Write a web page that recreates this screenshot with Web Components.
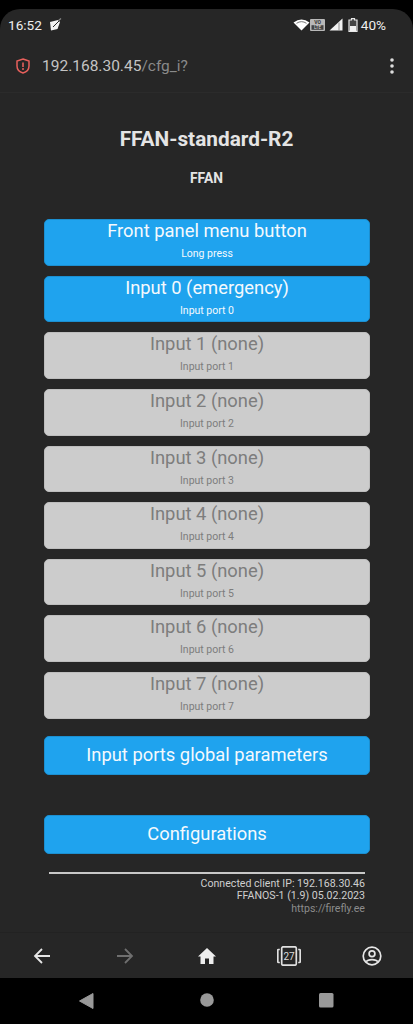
<!DOCTYPE html>
<html lang="en">
<head>
<meta charset="utf-8">
<title>FFAN-standard-R2</title>
<style>
  html, body { margin: 0; padding: 0; background: #000; }
  body { width: 413px; height: 1024px; overflow: hidden; font-family: Roboto, sans-serif; display: flex; flex-direction: column; }
</style>
</head>
<body>
<phone-status></phone-status>
<address-bar host="192.168.30.45" path="/cfg_i?"></address-bar>
<config-page>
  <cfg-button on label="Front panel menu button" sub="Long press"></cfg-button>
  <cfg-button on label="Input 0 (emergency)" sub="Input port 0"></cfg-button>
  <cfg-button label="Input 1 (none)" sub="Input port 1"></cfg-button>
  <cfg-button label="Input 2 (none)" sub="Input port 2"></cfg-button>
  <cfg-button label="Input 3 (none)" sub="Input port 3"></cfg-button>
  <cfg-button label="Input 4 (none)" sub="Input port 4"></cfg-button>
  <cfg-button label="Input 5 (none)" sub="Input port 5"></cfg-button>
  <cfg-button label="Input 6 (none)" sub="Input port 6"></cfg-button>
  <cfg-button label="Input 7 (none)" sub="Input port 7"></cfg-button>
  <cfg-button on wide label="Input ports global parameters" style="margin-top:7px"></cfg-button>
  <cfg-button on wide label="Configurations" style="margin-top:30px"></cfg-button>
</config-page>
<browser-toolbar></browser-toolbar>
<android-nav></android-nav>

<script>
class PhoneStatus extends HTMLElement {
  constructor() {
    super();
    this.attachShadow({ mode: 'open' });
    this.shadowRoot.innerHTML = `
      <style>
        :host { display: block; background: #000; color: #eee; font: 400 13.6px Roboto, sans-serif; }
        .bar {
          height: 31px;
          margin-top: 9px;
          padding: 0 27px 0 8px;
          background: #262626;
          border-radius: 20px 20px 0 0;
          display: flex;
          align-items: center;
        }
        .time { margin-right: 7px; }
        .gap { flex: 1; }
        svg { display: block; }
        .right { display: flex; align-items: center; }
      </style>
      <div class="bar">
        <span class="time">16:52</span>
        <svg width="13" height="13" viewBox="0 0 13 13"><path d="M1 4 L9 2 L11 4 L8.5 11 L2 12.5 Z" fill="#f2f2f2"/><path d="M4 9 L11 2" stroke="#262626" stroke-width="1"/><path d="M9.5 2.5 L12 0.5" stroke="#888" stroke-width="1.2"/></svg>
        <span class="gap"></span>
        <span class="right">
          <svg width="17" height="12" viewBox="0 0 17 12"><path d="M0.5 3.5 Q8.5 -2.5 16.5 3.5 L8.5 11.5 Z" fill="#fff"/><path d="M3.5 4.3 Q8.5 1 13.5 4.3" stroke="#555" stroke-width="0.8" fill="none"/></svg>
          <svg width="15" height="12" viewBox="0 0 15 12"><rect width="15" height="12" rx="1" fill="#b8b8b8"/><text x="7.5" y="5" font-family="Roboto, sans-serif" font-size="5" font-weight="700" fill="#333" text-anchor="middle">VO</text><rect x="1.5" y="6.2" width="12" height="4.6" fill="#444"/><text x="7.5" y="10.2" font-family="Roboto, sans-serif" font-size="4.6" fill="#ddd" text-anchor="middle">LTE</text></svg>
          <svg width="14" height="13" viewBox="0 0 14 13" style="margin-left:4px"><path d="M0.5 12.5 L13.5 0.5 V12.5 Z" fill="#f2f2f2"/><path d="M10 4.5 V12.5" stroke="#777" stroke-width="0.8"/></svg>
          <svg width="10" height="14" viewBox="0 0 10 14" style="margin-left:5px"><path d="M3.5 0.7 H6.5 V2 H9 V13.3 H1 V2 H3.5 Z" fill="#444" stroke="#e8e8e8" stroke-width="1.2"/><rect x="2" y="8" width="6" height="5" fill="#f0f0f0"/></svg>
          <span style="margin-left:3px">40%</span>
        </span>
      </div>
    `;
  }
}

class AddressBar extends HTMLElement {
  constructor() {
    super();
    this.attachShadow({ mode: 'open' });
  }

  connectedCallback() {
    this.shadowRoot.innerHTML = `
      <style>
        :host { display: block; background: #262626; }
        .bar { height: 52px; display: flex; align-items: center; padding: 0 19px 0 16px; font: 400 15.5px Roboto, sans-serif; }
        .url { margin-left: 12px; color: #c4c4c4; flex: 1; }
        .path { color: #8a8a8a; }
        svg { display: block; }
      </style>
      <div class="bar">
        <svg width="14" height="16" viewBox="0 0 14 16"><path d="M7 1 L13 3 V8 C13 11.5 10.5 14 7 15 C3.5 14 1 11.5 1 8 V3 Z" fill="none" stroke="#e8605c" stroke-width="1.5"/><path d="M7 4.5 V9" stroke="#e8605c" stroke-width="1.6"/><circle cx="7" cy="11" r="1" fill="#e8605c"/></svg>
        <span class="url">${this.getAttribute('host')}<span class="path">${this.getAttribute('path')}</span></span>
        <svg width="4" height="16" viewBox="0 0 4 16"><circle cx="2" cy="2" r="1.8" fill="#ddd"/><circle cx="2" cy="8" r="1.8" fill="#ddd"/><circle cx="2" cy="14" r="1.8" fill="#ddd"/></svg>
      </div>
    `;
  }
}

class ConfigPage extends HTMLElement {
  constructor() {
    super();
    this.attachShadow({ mode: 'open' });
    this.shadowRoot.innerHTML = `
      <style>
        :host { display: block; height: 840px; background: #262626; box-shadow: inset 0 1px 0 #2b2b2b; color: #e4e4e4; font-family: Roboto, sans-serif; }
        h1 { margin: 0; padding-top: 34px; font: 700 20.8px/26px Roboto, sans-serif; text-align: center; }
        h2 { margin: 0; padding-top: 18px; font: 700 13.8px/17px Roboto, sans-serif; text-align: center; }
        .buts { display: flex; flex-direction: column; margin: 32px 43px 0 44px; }
        .foot { margin: 8px 48px 0 49px; border-top: 2px solid #c8c8c8; padding-top: 4px; text-align: right; font: 400 10.6px/12.6px Roboto, sans-serif; color: #cfcfcf; }
        .link { color: #8c8c8c; }
      </style>
      <h1>FFAN-standard-R2</h1>
      <h2>FFAN</h2>
      <div class="buts"><slot></slot></div>
      <div class="foot">
        <div>Connected client IP: 192.168.30.46</div>
        <div>FFANOS-1 (1.9) 05.02.2023</div>
        <div class="link">https://firefly.ee</div>
      </div>
    `;
  }
}

class CfgButton extends HTMLElement {
  constructor() {
    super();
    this.attachShadow({ mode: 'open' });
  }

  connectedCallback() {
    const sub = this.getAttribute('sub');
    this.shadowRoot.innerHTML = `
      <style>
        :host {
          display: flex;
          flex-direction: column;
          align-items: center;
          box-sizing: border-box;
          height: 46.625px;
          margin-bottom: 10px;
          border-radius: 5px;
          background: #ccc;
          color: #7d7d7d;
          border: 1px solid #bdbdbd;
          font-family: Roboto, sans-serif;
        }
        :host([on]) { background: #1fa3ee; color: #f4f9fd; border-color: #1c8fd0; }
        :host([wide]) { height: 39px; justify-content: center; }
        .label { font-size: 18.35px; line-height: 22px; }
        .sub { font-size: 10.5px; line-height: 12px; margin-top: 6px; }
      </style>
      <span class="label">${this.getAttribute('label')}</span>
      ${sub ? `<span class="sub">${sub}</span>` : ''}
    `;
  }
}

class BrowserToolbar extends HTMLElement {
  constructor() {
    super();
    this.attachShadow({ mode: 'open' });
    this.shadowRoot.innerHTML = `
      <style>
        :host { display: block; background: #262626; border-top: 1px solid #222; box-sizing: border-box; height: 46px; }
        .bar { height: 100%; display: grid; grid-template-columns: repeat(5, 1fr); padding-left: 1px; }
        .cell { display: flex; align-items: center; justify-content: center; }
        svg { display: block; }
      </style>
      <div class="bar">
        <div class="cell"><svg width="18" height="18" viewBox="0 0 18 18"><path d="M17 9 H2 M9 2 L2 9 L9 16" fill="none" stroke="#e6e6e6" stroke-width="1.8"/></svg></div>
        <div class="cell"><svg width="18" height="18" viewBox="0 0 18 18"><path d="M1 9 H16 M9 2 L16 9 L9 16" fill="none" stroke="#6f6f6f" stroke-width="1.8"/></svg></div>
        <div class="cell"><svg width="20" height="18" viewBox="0 0 20 18"><path d="M10 1 L19 9.5 H16.5 V17 H12 V11.5 H8 V17 H3.5 V9.5 H1 Z" fill="#eee"/></svg></div>
        <div class="cell"><svg width="24" height="20" viewBox="0 0 24 20"><rect x="4.7" y="0.8" width="14.6" height="18.4" rx="1.5" fill="none" stroke="#e0e0e0" stroke-width="1.7"/><path d="M2.8 3.5 H1.6 Q0.8 3.5 0.8 4.3 V15.7 Q0.8 16.5 1.6 16.5 H2.8 M21.2 3.5 H22.4 Q23.2 3.5 23.2 4.3 V15.7 Q23.2 16.5 22.4 16.5 H21.2" fill="none" stroke="#e0e0e0" stroke-width="1.7"/><text x="12" y="13.5" font-family="Roboto, sans-serif" font-size="10" fill="#dcdcdc" text-anchor="middle">27</text></svg></div>
        <div class="cell"><svg width="20" height="20" viewBox="0 0 20 20"><circle cx="10" cy="10" r="8.8" fill="none" stroke="#e6e6e6" stroke-width="1.7"/><circle cx="10" cy="7.8" r="2.9" fill="none" stroke="#e6e6e6" stroke-width="1.7"/><path d="M4.2 15.8 C6 12.8 14 12.8 15.8 15.8" fill="none" stroke="#e6e6e6" stroke-width="1.7"/></svg></div>
      </div>
    `;
  }
}

class AndroidNav extends HTMLElement {
  constructor() {
    super();
    this.attachShadow({ mode: 'open' });
    this.shadowRoot.innerHTML = `
      <style>
        :host { display: block; background: #000; height: 46px; position: relative; }
        svg { position: absolute; top: 15px; }
      </style>
      <svg style="left:79px" width="15" height="16" viewBox="0 0 15 16"><path d="M14 0.5 V15.5 L0.5 8 Z" fill="#999" stroke="#999" stroke-linejoin="round"/></svg>
      <svg style="left:200px" width="14" height="14" viewBox="0 0 14 14"><circle cx="7" cy="7" r="6.8" fill="#999"/></svg>
      <svg style="left:319px" width="15" height="15" viewBox="0 0 15 15"><rect width="14.5" height="14.5" rx="1.5" fill="#999"/></svg>
    `;
  }
}

customElements.define('phone-status', PhoneStatus);
customElements.define('address-bar', AddressBar);
customElements.define('config-page', ConfigPage);
customElements.define('cfg-button', CfgButton);
customElements.define('browser-toolbar', BrowserToolbar);
customElements.define('android-nav', AndroidNav);
</script>
</body>
</html>
